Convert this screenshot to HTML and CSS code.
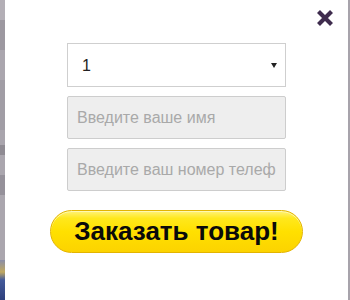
FILE: index.html
```html
<!DOCTYPE html>
<html lang="ru">
<head>
<meta charset="utf-8">
<title>Заказ</title>
<link rel="stylesheet" href="styles.css">
</head>
<body>
<div class="page">
  <div class="strip strip-left"></div>
  <div class="modal">
    <button class="close" aria-label="Закрыть">
      <svg width="18" height="18" viewBox="0 0 18 18"><path d="M2.5 2.5 L15.5 15.5 M15.5 2.5 L2.5 15.5" stroke="#3f2c4e" stroke-width="4.2" stroke-linecap="butt"/></svg>
    </button>
    <form class="form">
      <div class="select">
        <span class="select-value">1</span>
        <span class="select-arrow"></span>
      </div>
      <input class="field field-name" type="text" placeholder="Введите ваше имя">
      <input class="field field-phone" type="text" placeholder="Введите ваш номер телефона">
      <button type="button" class="order">Заказать товар!</button>
    </form>
  </div>
  <div class="strip strip-right"></div>
</div>
</body>
</html>
```
FILE: styles.css
```css
* { box-sizing: border-box; }
html, body { margin: 0; padding: 0; }
body {
  width: 350px;
  height: 300px;
  overflow: hidden;
  font-family: "Liberation Sans", Arial, sans-serif;
  background: #a6a2aa;
}
.page {
  display: flex;
  height: 300px;
}
.strip { flex: none; }
.strip-left {
  width: 5px;
  background: linear-gradient(to bottom,
    #b3afb6 0, #b3afb6 20px,
    #9c98a0 20px, #9c98a0 50px,
    #aaa6ae 50px, #aaa6ae 80px,
    #a19da5 80px, #a19da5 130px,
    #a9a5ad 130px, #a9a5ad 145px,
    #8f8b93 145px, #8f8b93 155px,
    #aaa6ae 155px, #aaa6ae 175px,
    #95919a 175px, #95919a 195px,
    #aaa6ae 195px, #aaa6ae 260px,
    #8a8ea8 260px, #c0a860 272px, #445a9a 280px, #2e3f7c 300px);
}
.strip-right {
  width: 2px;
  background: #a7a3ab;
}
.modal {
  position: relative;
  flex: 1;
  background: #fff;
  padding-top: 43px;
}
.close {
  position: absolute;
  top: 9px;
  right: 14px;
  width: 18px;
  height: 18px;
  padding: 0;
  border: 0;
  background: none;
  cursor: pointer;
}
.close svg { display: block; }
.form {
  display: flex;
  flex-direction: column;
  align-items: flex-start;
  padding-left: 62px;
}
.select {
  width: 219px;
  height: 44px;
  border: 1px solid #cfcfcf;
  background: #fff;
  display: flex;
  align-items: center;
  justify-content: space-between;
  padding: 0 8px 0 14px;
  font-size: 16px;
  color: #222;
}
.select-value { padding-top: 1px; }
.select-arrow {
  width: 0;
  height: 0;
  border-left: 3.5px solid transparent;
  border-right: 3.5px solid transparent;
  border-top: 5px solid #222;
  margin-top: 1px;
}
.field {
  width: 219px;
  height: 43px;
  border: 1px solid #cdcdcd;
  border-radius: 2px;
  background: #eeeeee;
  padding: 0 9px;
  font-family: "Liberation Sans", Arial, sans-serif;
  font-size: 16px;
  color: #333;
  outline: none;
}
.field-name { margin-top: 9px; }
.field-phone { margin-top: 9px; }
.field::placeholder { color: #a9a9a9; }
.order {
  margin-top: 19px;
  margin-left: -17px;
  width: 253px;
  height: 43px;
  border-radius: 22px;
  border: 1px solid #e3b400;
  background: linear-gradient(to bottom, #fff27a 0%, #ffe81c 18%, #ffe000 50%, #fcd300 100%);
  box-shadow: inset 0 1px 0 #fff9b0;
  font-family: "Liberation Sans", Arial, sans-serif;
  font-weight: bold;
  font-size: 26px;
  color: #0a0a0a;
  padding: 0 0 1px;
  cursor: pointer;
}
```
